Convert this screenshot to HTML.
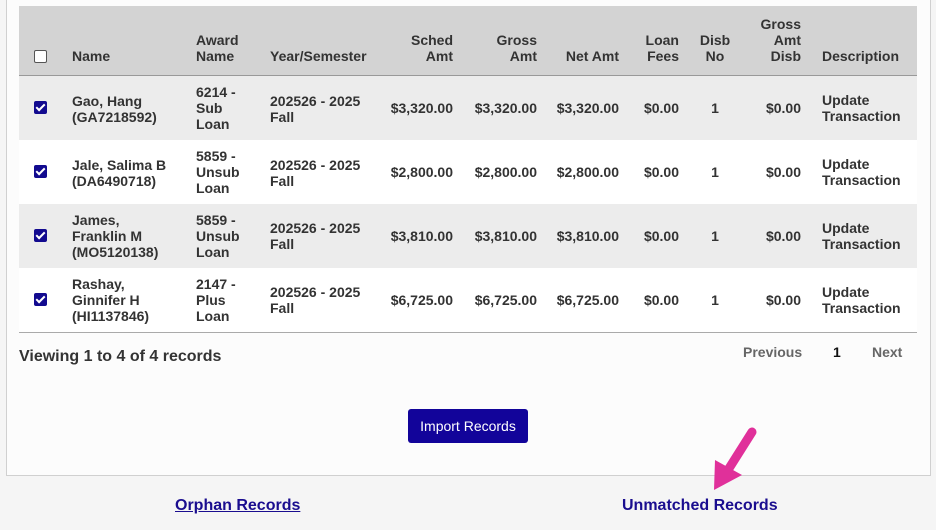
<!DOCTYPE html>
<html><head><style>
body{margin:0;width:936px;height:530px;background:#f5f5f5;font-family:"Liberation Sans",Arial,sans-serif;position:relative;overflow:hidden;color:#333}
.panel{position:absolute;left:6px;top:-2px;width:923px;height:476px;background:#fcfcfc;border:1px solid #d0d0d0}
.t{position:absolute;font-weight:bold;font-size:14px;line-height:16px;color:#333}
.r{text-align:right}
.row{position:absolute;left:19px;width:898px;height:64px}
.cb{position:absolute;left:34px;width:13px;height:13px;border-radius:2px}
.cb.on{background:#120a8f}
.cb.on:after{content:"";position:absolute;left:4px;top:1px;width:3px;height:7px;border:solid #fff;border-width:0 2px 2px 0;transform:rotate(45deg)}
.cb.off{background:#fff;border:1px solid #555;width:11px;height:11px}
</style></head><body>
<div class="panel"></div>
<div class="row" style="top:6px;height:69px;background:#d3d3d3;border-bottom:1px solid #999"></div>
<div class="cb off" style="top:50px"></div>
<div class="t" style="left:72px;top:48px">Name</div>
<div class="t" style="left:196px;top:32px">Award<br>Name</div>
<div class="t" style="left:270px;top:48px">Year/Semester</div>
<div class="t r" style="left:353px;width:100px;top:32px">Sched<br>Amt</div>
<div class="t r" style="left:437px;width:100px;top:32px">Gross<br>Amt</div>
<div class="t r" style="left:519px;width:100px;top:48px">Net Amt</div>
<div class="t r" style="left:579px;width:100px;top:32px">Loan<br>Fees</div>
<div class="t" style="left:690px;width:50px;text-align:center;top:32px">Disb<br>No</div>
<div class="t r" style="left:701px;width:100px;top:16px">Gross<br>Amt<br>Disb</div>
<div class="t" style="left:822px;top:48px">Description</div>

<div class="row" style="top:76px;background:#ececec"></div>
<div class="row" style="top:140px;background:#fff"></div>
<div class="row" style="top:204px;background:#ececec"></div>
<div class="row" style="top:268px;background:#fff;border-bottom:1px solid #aaa"></div>

<div class="cb on" style="top:101px"></div>
<div class="t" style="left:72px;top:93px">Gao, Hang<br>(GA7218592)</div>
<div class="t" style="left:196px;top:84px">6214 -<br>Sub<br>Loan</div>
<div class="t" style="left:270px;top:93px">202526 - 2025<br>Fall</div>
<div class="t r" style="left:353px;width:100px;top:100px">$3,320.00</div>
<div class="t r" style="left:437px;width:100px;top:100px">$3,320.00</div>
<div class="t r" style="left:519px;width:100px;top:100px">$3,320.00</div>
<div class="t r" style="left:579px;width:100px;top:100px">$0.00</div>
<div class="t" style="left:690px;width:50px;text-align:center;top:100px">1</div>
<div class="t r" style="left:701px;width:100px;top:100px">$0.00</div>
<div class="t" style="left:822px;top:92px">Update<br>Transaction</div>

<div class="cb on" style="top:165px"></div>
<div class="t" style="left:72px;top:157px">Jale, Salima B<br>(DA6490718)</div>
<div class="t" style="left:196px;top:148px">5859 -<br>Unsub<br>Loan</div>
<div class="t" style="left:270px;top:157px">202526 - 2025<br>Fall</div>
<div class="t r" style="left:353px;width:100px;top:164px">$2,800.00</div>
<div class="t r" style="left:437px;width:100px;top:164px">$2,800.00</div>
<div class="t r" style="left:519px;width:100px;top:164px">$2,800.00</div>
<div class="t r" style="left:579px;width:100px;top:164px">$0.00</div>
<div class="t" style="left:690px;width:50px;text-align:center;top:164px">1</div>
<div class="t r" style="left:701px;width:100px;top:164px">$0.00</div>
<div class="t" style="left:822px;top:156px">Update<br>Transaction</div>

<div class="cb on" style="top:229px"></div>
<div class="t" style="left:72px;top:212px">James,<br>Franklin M<br>(MO5120138)</div>
<div class="t" style="left:196px;top:212px">5859 -<br>Unsub<br>Loan</div>
<div class="t" style="left:270px;top:220px">202526 - 2025<br>Fall</div>
<div class="t r" style="left:353px;width:100px;top:228px">$3,810.00</div>
<div class="t r" style="left:437px;width:100px;top:228px">$3,810.00</div>
<div class="t r" style="left:519px;width:100px;top:228px">$3,810.00</div>
<div class="t r" style="left:579px;width:100px;top:228px">$0.00</div>
<div class="t" style="left:690px;width:50px;text-align:center;top:228px">1</div>
<div class="t r" style="left:701px;width:100px;top:228px">$0.00</div>
<div class="t" style="left:822px;top:220px">Update<br>Transaction</div>

<div class="cb on" style="top:293px"></div>
<div class="t" style="left:72px;top:276px">Rashay,<br>Ginnifer H<br>(HI1137846)</div>
<div class="t" style="left:196px;top:276px">2147 -<br>Plus<br>Loan</div>
<div class="t" style="left:270px;top:284px">202526 - 2025<br>Fall</div>
<div class="t r" style="left:353px;width:100px;top:292px">$6,725.00</div>
<div class="t r" style="left:437px;width:100px;top:292px">$6,725.00</div>
<div class="t r" style="left:519px;width:100px;top:292px">$6,725.00</div>
<div class="t r" style="left:579px;width:100px;top:292px">$0.00</div>
<div class="t" style="left:690px;width:50px;text-align:center;top:292px">1</div>
<div class="t r" style="left:701px;width:100px;top:292px">$0.00</div>
<div class="t" style="left:822px;top:284px">Update<br>Transaction</div>

<div class="t" style="left:19px;top:348px;font-size:16px;line-height:18px">Viewing 1 to 4 of 4 records</div>
<div class="t" style="left:743px;top:344px;color:#666">Previous</div>
<div class="t" style="left:833px;top:344px;color:#111">1</div>
<div class="t" style="left:872px;top:344px;color:#666">Next</div>

<div style="position:absolute;left:408px;top:409px;width:120px;height:34px;background:#12049a;border-radius:3px;color:#fff;font-size:14px;line-height:34px;text-align:center">Import Records</div>

<div class="t" style="left:175px;top:497px;font-size:16px;line-height:18px;color:#1a0d8f;text-decoration:underline">Orphan Records</div>
<div class="t" style="left:622px;top:497px;font-size:16px;line-height:18px;color:#1a0d8f">Unmatched Records</div>

<svg style="position:absolute;left:700px;top:420px" width="70" height="75" viewBox="0 0 70 75">
<line x1="52" y1="12" x2="28" y2="50" stroke="#e0309a" stroke-width="9" stroke-linecap="round"/>
<polygon points="15,40 14,70 42,55" fill="#e0309a"/>
</svg>
</body></html>
